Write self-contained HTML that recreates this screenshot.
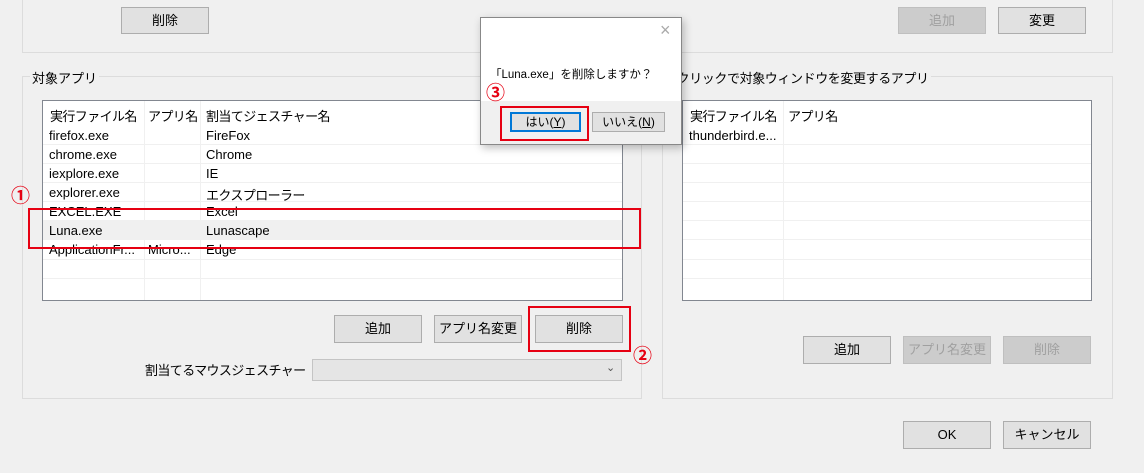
<html><head><style>
body{margin:0;width:1144px;height:473px;background:#f0f0f0;position:relative;overflow:hidden;font-family:"Liberation Sans","Noto Sans CJK JP",sans-serif;font-size:13px;color:#000}
.a{position:absolute;box-sizing:border-box}
.btn{position:absolute;box-sizing:border-box;background:#e1e1e1;border:1px solid #adadad;text-align:center;font-size:13px}
.dis{color:#a0a0a0;background:#cccccc;border-color:#bfbfbf}
.grp{position:absolute;box-sizing:border-box;border:1px solid #dcdcdc}
.lbl{position:absolute;background:#f0f0f0;padding:0 2px;font-size:13px}
.list{position:absolute;box-sizing:border-box;background:#fff;border:1px solid #828790}
.t{position:absolute;white-space:nowrap;font-size:13px}
.h{position:absolute;white-space:nowrap;font-size:13px;letter-spacing:-0.6px}
.hl{position:absolute;height:1px;background:#f0f0f0}
.vl{position:absolute;width:1px;background:#f0f0f0}
.red{position:absolute;box-sizing:border-box;border:2px solid #e60012}
.num{position:absolute;color:#e60012;font-weight:bold;font-size:19px;line-height:19px}
</style></head><body>
<div class="grp" style="left:22px;top:-5px;width:1091px;height:58px"></div>
<div class="btn" style="left:121px;top:7px;width:88px;height:27px;line-height:25px">削除</div>
<div class="btn dis" style="left:898px;top:7px;width:88px;height:27px;line-height:25px">追加</div>
<div class="btn" style="left:998px;top:7px;width:88px;height:27px;line-height:25px">変更</div>

<div class="grp" style="left:22px;top:76px;width:620px;height:323px"></div>
<div class="lbl" style="left:30px;top:68px">対象アプリ</div>
<div class="list" style="left:42px;top:100px;width:581px;height:201px">
<div class="vl" style="left:101px;top:0;height:199px"></div>
<div class="vl" style="left:157px;top:0;height:199px"></div>
<div class="hl" style="left:0;top:43px;width:579px"></div>
<div class="hl" style="left:0;top:62px;width:579px"></div>
<div class="hl" style="left:0;top:81px;width:579px"></div>
<div class="hl" style="left:0;top:100px;width:579px"></div>
<div class="hl" style="left:0;top:119px;width:579px"></div>
<div class="a" style="left:0;top:120px;width:579px;height:19px;background:#f0f0f0"></div>
<div class="hl" style="left:0;top:158px;width:579px"></div>
<div class="hl" style="left:0;top:177px;width:579px"></div>
<div class="h" style="left:7px;top:5px">実行ファイル名</div>
<div class="h" style="left:105px;top:5px">アプリ名</div>
<div class="h" style="left:163px;top:5px">割当てジェスチャー名</div>
<div class="t" style="left:6px;top:27px">firefox.exe</div><div class="t" style="left:163px;top:27px">FireFox</div>
<div class="t" style="left:6px;top:46px">chrome.exe</div><div class="t" style="left:163px;top:46px">Chrome</div>
<div class="t" style="left:6px;top:65px">iexplore.exe</div><div class="t" style="left:163px;top:65px">IE</div>
<div class="t" style="left:6px;top:84px">explorer.exe</div><div class="h" style="left:163px;top:84px">エクスプローラー</div>
<div class="t" style="left:6px;top:103px">EXCEL.EXE</div><div class="t" style="left:163px;top:103px">Excel</div>
<div class="t" style="left:6px;top:122px">Luna.exe</div><div class="t" style="left:163px;top:122px">Lunascape</div>
<div class="t" style="left:6px;top:141px">ApplicationFr...</div><div class="t" style="left:105px;top:141px">Micro...</div><div class="t" style="left:163px;top:141px">Edge</div>
</div>
<div class="red" style="left:28px;top:208px;width:613px;height:41px"></div>
<div class="num" style="left:11px;top:187px">①</div>
<div class="btn" style="left:334px;top:315px;width:88px;height:28px;line-height:26px">追加</div>
<div class="btn" style="left:434px;top:315px;width:88px;height:28px;line-height:26px">アプリ名変更</div>
<div class="btn" style="left:535px;top:315px;width:88px;height:28px;line-height:26px">削除</div>
<div class="red" style="left:528px;top:306px;width:103px;height:46px"></div>
<div class="num" style="left:633px;top:347px">②</div>
<div class="h" style="left:145px;top:360px">割当てるマウスジェスチャー</div>
<div class="a" style="left:312px;top:359px;width:310px;height:22px;background:#e5e5e5;border:1px solid #c4c4c4"></div>
<div class="t" style="left:606px;top:361px;font-size:11px;color:#555">&#8964;</div>

<div class="grp" style="left:662px;top:76px;width:451px;height:323px"></div>
<div class="lbl" style="left:662px;top:68px;letter-spacing:-0.4px">右クリックで対象ウィンドウを変更するアプリ</div>
<div class="list" style="left:682px;top:100px;width:410px;height:201px">
<div class="vl" style="left:100px;top:0;height:199px"></div>
<div class="hl" style="left:0;top:43px;width:408px"></div>
<div class="hl" style="left:0;top:62px;width:408px"></div>
<div class="hl" style="left:0;top:81px;width:408px"></div>
<div class="hl" style="left:0;top:100px;width:408px"></div>
<div class="hl" style="left:0;top:119px;width:408px"></div>
<div class="hl" style="left:0;top:138px;width:408px"></div>
<div class="hl" style="left:0;top:158px;width:408px"></div>
<div class="hl" style="left:0;top:177px;width:408px"></div>
<div class="h" style="left:7px;top:5px">実行ファイル名</div>
<div class="h" style="left:105px;top:5px">アプリ名</div>
<div class="t" style="left:6px;top:27px">thunderbird.e...</div>
</div>
<div class="btn" style="left:803px;top:336px;width:88px;height:28px;line-height:26px">追加</div>
<div class="btn dis" style="left:903px;top:336px;width:88px;height:28px;line-height:26px">アプリ名変更</div>
<div class="btn dis" style="left:1003px;top:336px;width:88px;height:28px;line-height:26px">削除</div>
<div class="btn" style="left:903px;top:421px;width:88px;height:28px;line-height:26px">OK</div>
<div class="btn" style="left:1003px;top:421px;width:88px;height:28px;line-height:26px">キャンセル</div>

<div class="a" style="left:480px;top:17px;width:202px;height:128px;background:#fff;border:1px solid #888;box-shadow:2px 3px 8px rgba(0,0,0,.25)">
<div class="a" style="left:0;top:83px;width:200px;height:43px;background:#f0f0f0"></div>
<div class="t" style="left:179px;top:2px;font-size:18px;color:#aaa">×</div>
<div class="t" style="left:9px;top:48px;font-size:11.5px">「Luna.exe」を削除しますか？</div>
<div class="btn" style="left:29px;top:94px;width:71px;height:20px;line-height:17px;border:2px solid #0078d7;font-size:12px">はい(<u>Y</u>)</div>
<div class="btn" style="left:111px;top:94px;width:73px;height:20px;line-height:18px;font-size:12px">いいえ(<u>N</u>)</div>
</div>
<div class="red" style="left:500px;top:106px;width:89px;height:35px"></div>
<div class="num" style="left:486px;top:84px">③</div>
</body></html>
